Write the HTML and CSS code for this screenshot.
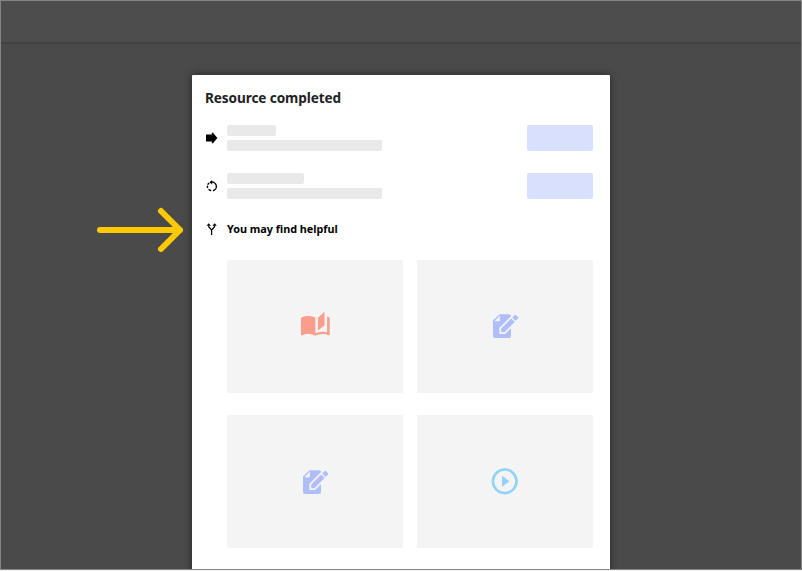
FILE: index.html
```html
<!DOCTYPE html>
<html lang="en">
<head>
<meta charset="utf-8">
<title>Resource completed</title>
<link rel="stylesheet" href="styles.css">
</head>
<body>
<svg class="defs" width="0" height="0">
  <symbol id="edit" viewBox="0 0 50 50">
    <path fill="#afbef8" d="M19.5 13.2H29Q31 13.2 31 15V35Q31 37 29 37H15Q13 37 13 35V19.5Z"/>
    <path fill="#f4f4f4" d="M19.8 14.6V20.2H14.6Z"/>
    <path fill="#afbef8" stroke="#f4f4f4" stroke-width="1.8" d="M20.3 32.2V27.2L33.8 13.6Q35.2 12.2 36.6 13.6L38.7 15.7Q39.8 16.9 38.7 18.1L24.8 32.2Z"/>
    <path stroke="#f4f4f4" stroke-width="1.3" d="M30.8 16L36.3 21.5"/>
  </symbol>
</svg>
<div class="page">
  <header class="topbar"></header>
  <main class="stage">
    <svg class="pointer" viewBox="0 0 90 50"><path d="M10 25H90M71 6L90 25L71 44"/></svg>
    <section class="modal">
      <h1>Resource completed</h1>
      <div class="row">
        <svg class="icon" viewBox="0 0 14 14"><path d="M1 3.6H6.8V1.8H8L12.4 7L8 12.2H6.8V10.4H1Z"/></svg>
        <div class="lines"><i class="short"></i><i></i></div>
        <div class="button"></div>
      </div>
      <div class="row">
        <svg class="icon" viewBox="0 0 14 14"><path class="ring" d="M6 3.2A4.3 4.3 0 0 1 8 11.7M6.2 11.7A4.3 4.3 0 0 1 3.6 10.3M2.7 9.1A4.3 4.3 0 0 1 2.5 6.6M2.7 5.7A4.3 4.3 0 0 1 4.2 4"/><path d="M4.4 3.2L7.1 1V5.4Z"/></svg>
        <div class="lines"><i class="medium"></i><i></i></div>
        <div class="button"></div>
      </div>
      <div class="helpful">
        <svg class="icon" viewBox="0 0 14 14"><path class="fork" d="M3.7 3.5V4.7L6.6 8V13M9.6 3.5V4.7L6.6 8"/><path d="M1.5 3.7L3.7 1.3L5.9 3.7ZM7.4 3.7L9.6 1.3L11.8 3.7Z"/></svg>
        <h2>You may find helpful</h2>
      </div>
      <div class="cards">
        <div class="card"><svg viewBox="0 0 50 50"><path fill="#fb9d8c" transform="translate(9.7 9.7) scale(1.305 1.17)" d="m19 1-5 5v11l5-4.5V1zM1 6v14.65c0 .25.25.5.5.5.1 0 .15-.05.25-.05C3.1 20.45 5.05 20 6.5 20c1.95 0 4.05.4 5.5 1.5V6c-1.45-1.1-3.55-1.5-5.5-1.5S2.45 4.9 1 6zm22 13.5V6c-.6-.45-1.25-.75-2-1v13.5c-1.1-.35-2.3-.5-3.5-.5-1.7 0-4.15.65-5.5 1.5v2c1.35-.85 3.8-1.5 5.5-1.5 1.65 0 3.35.3 4.75 1.05.1.05.15.05.25.05.25 0 .5-.25.5-.5v-1.1z"/></svg></div>
        <div class="card"><svg><use href="#edit"/></svg></div>
        <div class="card"><svg><use href="#edit"/></svg></div>
        <div class="card"><svg viewBox="0 0 50 50"><circle cx="24.7" cy="24.3" r="11.8" fill="none" stroke="#93d2f8" stroke-width="2.6"/><path fill="#93d2f8" d="M22 18.8L29.5 24.3L22 29.8Z"/></svg></div>
      </div>
    </section>
  </main>
</div>
</body>
</html>
```
FILE: styles.css
```css
* { box-sizing: border-box; }
body { margin: 0; background: #f4f4f4; font-family: "Noto Sans", "Open Sans", sans-serif; overflow: hidden; }
.defs { display: block; height: 0; }
.page { width: 802px; height: 570px; border: 1px solid #858585; background: #4a4a4a; overflow: hidden; }
.topbar { height: 43px; background: #4d4d4d; border-bottom: 2px solid #404040; }
.stage { display: flex; align-items: flex-start; padding: 31px 0 0 93px; }
.pointer { width: 90px; height: 50px; margin: 130px 8px 0 0; overflow: visible; flex: none; }
.pointer path { fill: none; stroke: #ffc900; stroke-width: 6; stroke-linecap: round; stroke-linejoin: round; transform: translateX(-4px); }
.modal { width: 418px; height: 500px; flex: none; padding: 13px 17px 0 13px; background: #fff; border-radius: 1px; box-shadow: 0 0 8px rgba(0, 0, 0, .5); }
h1, h2 { margin: 0; font-weight: 700; }
h1 { height: 37px; font-size: 13.6px; letter-spacing: -.1px; line-height: 20px; color: #222; }
.row { display: flex; align-items: center; height: 26px; margin-bottom: 22px; }
.icon { width: 14px; height: 14px; margin-right: 8px; flex: none; }
.ring { fill: none; stroke: #000; stroke-width: 1.4; }
.fork { fill: none; stroke: #000; stroke-width: 1.2; }
.lines { flex: 1; display: flex; flex-direction: column; gap: 4.5px; }
.lines i { width: 154.5px; height: 10.75px; border-radius: 2px; background: #e9e9e9; }
.lines .short { width: 49px; }
.lines .medium { width: 77px; }
.button { width: 66px; height: 26px; border-radius: 2px; background: #d9e0fd; }
.helpful { display: flex; align-items: center; height: 16px; }
h2 { font-size: 10.8px; line-height: 16px; color: #000; }
.cards { display: grid; grid-template-columns: 176px 176px; gap: 22.5px 13.5px; margin: 22.5px 0 0 22px; }
.card { display: flex; align-items: center; justify-content: center; height: 133px; background: #f4f4f4; border-radius: 1px; }
.card svg { width: 50px; height: 50px; }
```
